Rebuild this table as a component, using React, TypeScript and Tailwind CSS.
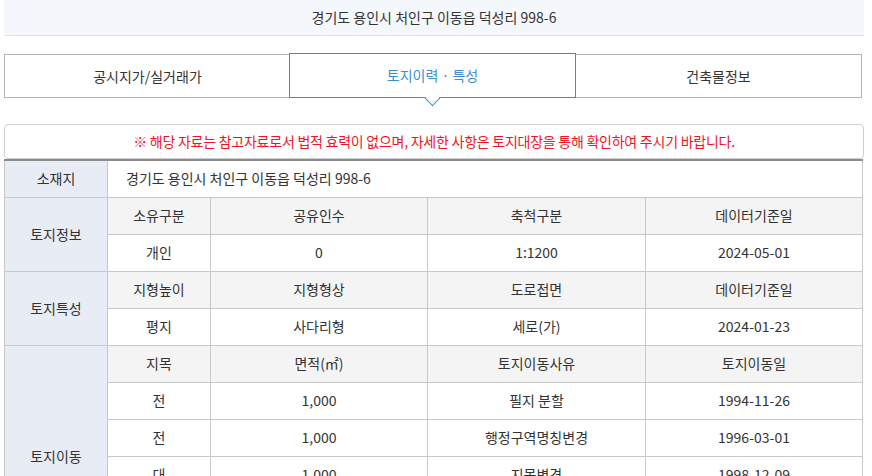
import React from 'react';

const font = { fontFamily: '"Noto Sans CJK KR", "Noto Sans", sans-serif' };

const rows: { label: string; span: number; cells: string[][] }[] = [
    {
        label: '토지정보',
        span: 2,
        cells: [
            ['소유구분', '공유인수', '축척구분', '데이터기준일'],
            ['개인', '0', '1:1200', '2024-05-01'],
        ],
    },
    {
        label: '토지특성',
        span: 2,
        cells: [
            ['지형높이', '지형형상', '도로접면', '데이터기준일'],
            ['평지', '사다리형', '세로(가)', '2024-01-23'],
        ],
    },
    {
        label: '토지이동',
        span: 6,
        cells: [
            ['지목', '면적(㎡)', '토지이동사유', '토지이동일'],
            ['전', '1,000', '필지 분할', '1994-11-26'],
            ['전', '1,000', '행정구역명칭변경', '1996-03-01'],
            ['대', '1,000', '지목변경', '1998-12-09'],
            ['대', '1,000', '지번변경', '2003-07-15'],
            ['대', '1,000', '등록사항정정', '2010-04-22'],
        ],
    },
];

const tabs = ['공시지가/실거래가', '토지이력 · 특성', '건축물정보'];

export default function App() {
    return (
        <div className="w-[872px] bg-white text-[14px] text-[#333]" style={font}>
            {/* Address header */}
            <div className="ml-1 w-[860px] h-9 flex items-center justify-center bg-[#f4f8fd] border-b border-[#dfe4ea]">
                경기도 용인시 처인구 이동읍 덕성리 998-6
            </div>

            {/* Tabs */}
            <div className="ml-1 w-[858px] mt-[18px] flex h-11">
                {tabs.map((t, i) => (
                    i === 1 ? (
                        <div key={t} className="relative flex-1 -ml-[2px] z-10 -mt-px h-[45px] flex items-center justify-center border border-[#2b93dd] bg-white text-[#3a8fd8]">
                            {t}
                            <span className="absolute left-1/2 -bottom-[7px] -ml-[6px] w-[11px] h-[11px] rotate-45 bg-white border-r border-b border-[#2b93dd]" />
                        </div>
                    ) : (
                        <div key={t} className={`flex-1 flex items-center justify-center border border-[#b4b4b4] ${i === 2 ? '-ml-px' : ''}`}>
                            {t}
                        </div>
                    )
                ))}
            </div>

            {/* Notice */}
            <div className="ml-1 w-[860px] mt-[26px] h-[35px] flex items-center justify-center border border-[#cfcfcf] rounded-[4px] text-[#f0141e] tracking-[-0.25px]">
                ※ 해당 자료는 참고자료로서 법적 효력이 없으며, 자세한 사항은 토지대장을 통해 확인하여 주시기 바랍니다.
            </div>

            {/* Table */}
            <table className="ml-1 w-[859px] border-collapse table-fixed border-t-2 border-t-[#8c8c8c]">
                <colgroup>
                    <col className="w-[103px]" />
                    <col className="w-[103px]" />
                    <col className="w-[217px]" />
                    <col className="w-[218px]" />
                    <col />
                </colgroup>
                <tbody>
                    <tr className="h-[37px]">
                        <th className="font-normal bg-[#e8edf5] border border-[#c8c8c8] border-t-0">소재지</th>
                        <td colSpan={4} className="border border-[#c8c8c8] border-t-0 pl-[18px] text-left">
                            경기도 용인시 처인구 이동읍 덕성리 998-6
                        </td>
                    </tr>
                    {rows.map(g =>
                        g.cells.map((r, ri) => (
                            <tr key={g.label + ri} className="h-[37px]">
                                {ri === 0 && (
                                    <th rowSpan={g.span} className="font-normal bg-[#e8edf5] border border-[#c8c8c8]">
                                        {g.label}
                                    </th>
                                )}
                                {r.map((c, ci) => (
                                    <td
                                        key={ci}
                                        className={`text-center border border-[#c8c8c8] ${ri === 0 ? 'bg-[#f4f4f4]' : 'bg-white'}`}
                                    >
                                        {c}
                                    </td>
                                ))}
                            </tr>
                        ))
                    )}
                </tbody>
            </table>
        </div>
    );
}
